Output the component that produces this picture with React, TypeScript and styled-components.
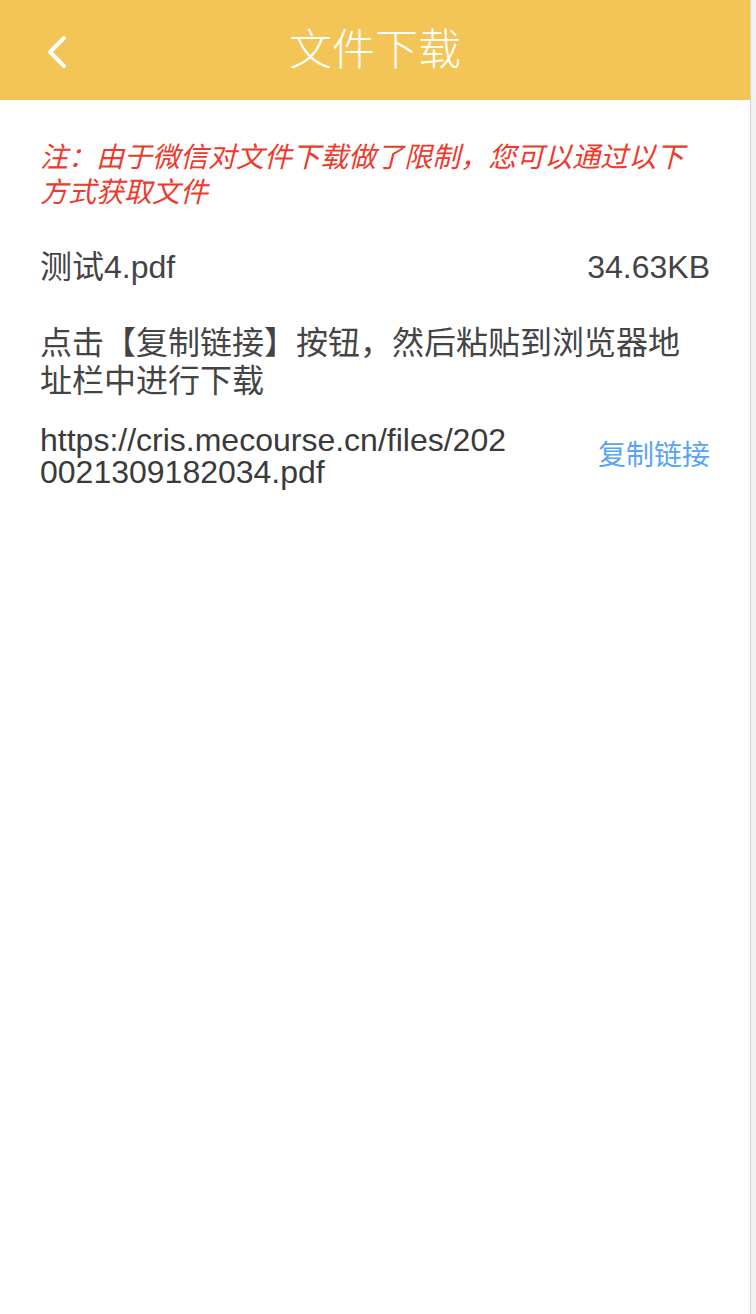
import React from "react";
import styled, { createGlobalStyle } from "styled-components";

const Global = createGlobalStyle`
  html, body { margin: 0; padding: 0; background: #fff; }
  body { font-family: "Liberation Sans", "Noto Sans CJK SC", sans-serif; }
  * { box-sizing: border-box; }
`;

const Shell = styled.div`
  display: flex;
  width: 756px;
  min-height: 1314px;
`;

const Page = styled.div`
  width: 750px;
  flex: 0 0 750px;
  display: flex;
  flex-direction: column;
  background: #fff;
`;

const SideTrack = styled.div`
  flex: 1;
  background: #f1f1f1;
  border-left: 1px solid #d2d2d2;
`;

const Header = styled.header`
  position: relative;
  height: 100px;
  background: #f3c456;
  display: flex;
  align-items: center;
  justify-content: center;
`;

const BackButton = styled.button`
  position: absolute;
  left: 40px;
  top: 28px;
  width: 40px;
  height: 44px;
  padding: 0;
  border: 0;
  background: transparent;
  display: flex;
  align-items: center;
  justify-content: flex-start;
`;

const Title = styled.h1`
  margin: 0 0 7px;
  color: #fff;
  font-family: "Noto Sans CJK SC", sans-serif;
  font-size: 43px;
  font-weight: 300;
  line-height: 1;
`;

const Body = styled.main`
  padding: 40px 40px 0;
  display: flex;
  flex-direction: column;
`;

const Note = styled.p`
  margin: 0;
  color: #ee3a2c;
  font-size: 28px;
  font-style: italic;
  line-height: 35px;
`;

const FileRow = styled.div`
  margin-top: 37px;
  display: flex;
  justify-content: space-between;
  align-items: center;
  color: #444;
  font-size: 32px;
  line-height: 40px;
`;

const Instruction = styled.p`
  margin: 37px 0 0;
  color: #444;
  font-size: 32px;
  line-height: 38px;
`;

const LinkRow = styled.div`
  margin-top: 24px;
  display: flex;
  justify-content: space-between;
  align-items: center;
`;

const Url = styled.div`
  width: 480px;
  color: #3a3a3a;
  font-size: 32px;
  line-height: 32px;
  word-break: break-all;
`;

const CopyLink = styled.span`
  color: #58a6f3;
  font-size: 28px;
  line-height: 32px;
`;

export default function App() {
  return (
    <>
      <Global />
      <Shell>
        <Page>
          <Header>
            <BackButton aria-label="back">
              <svg width="30" height="40" viewBox="0 0 30 40">
                <polyline
                  points="24,8 10,22 24,36"
                  fill="none"
                  stroke="#fff"
                  strokeWidth="4"
                  strokeLinecap="round"
                  strokeLinejoin="round"
                />
              </svg>
            </BackButton>
            <Title>文件下载</Title>
          </Header>
          <Body>
            <Note>注：由于微信对文件下载做了限制，您可以通过以下方式获取文件</Note>
            <FileRow>
              <span>测试4.pdf</span>
              <span>34.63KB</span>
            </FileRow>
            <Instruction>点击【复制链接】按钮，然后粘贴到浏览器地址栏中进行下载</Instruction>
            <LinkRow>
              <Url>https://cris.mecourse.cn/files/2020021309182034.pdf</Url>
              <CopyLink>复制链接</CopyLink>
            </LinkRow>
          </Body>
        </Page>
        <SideTrack />
      </Shell>
    </>
  );
}
